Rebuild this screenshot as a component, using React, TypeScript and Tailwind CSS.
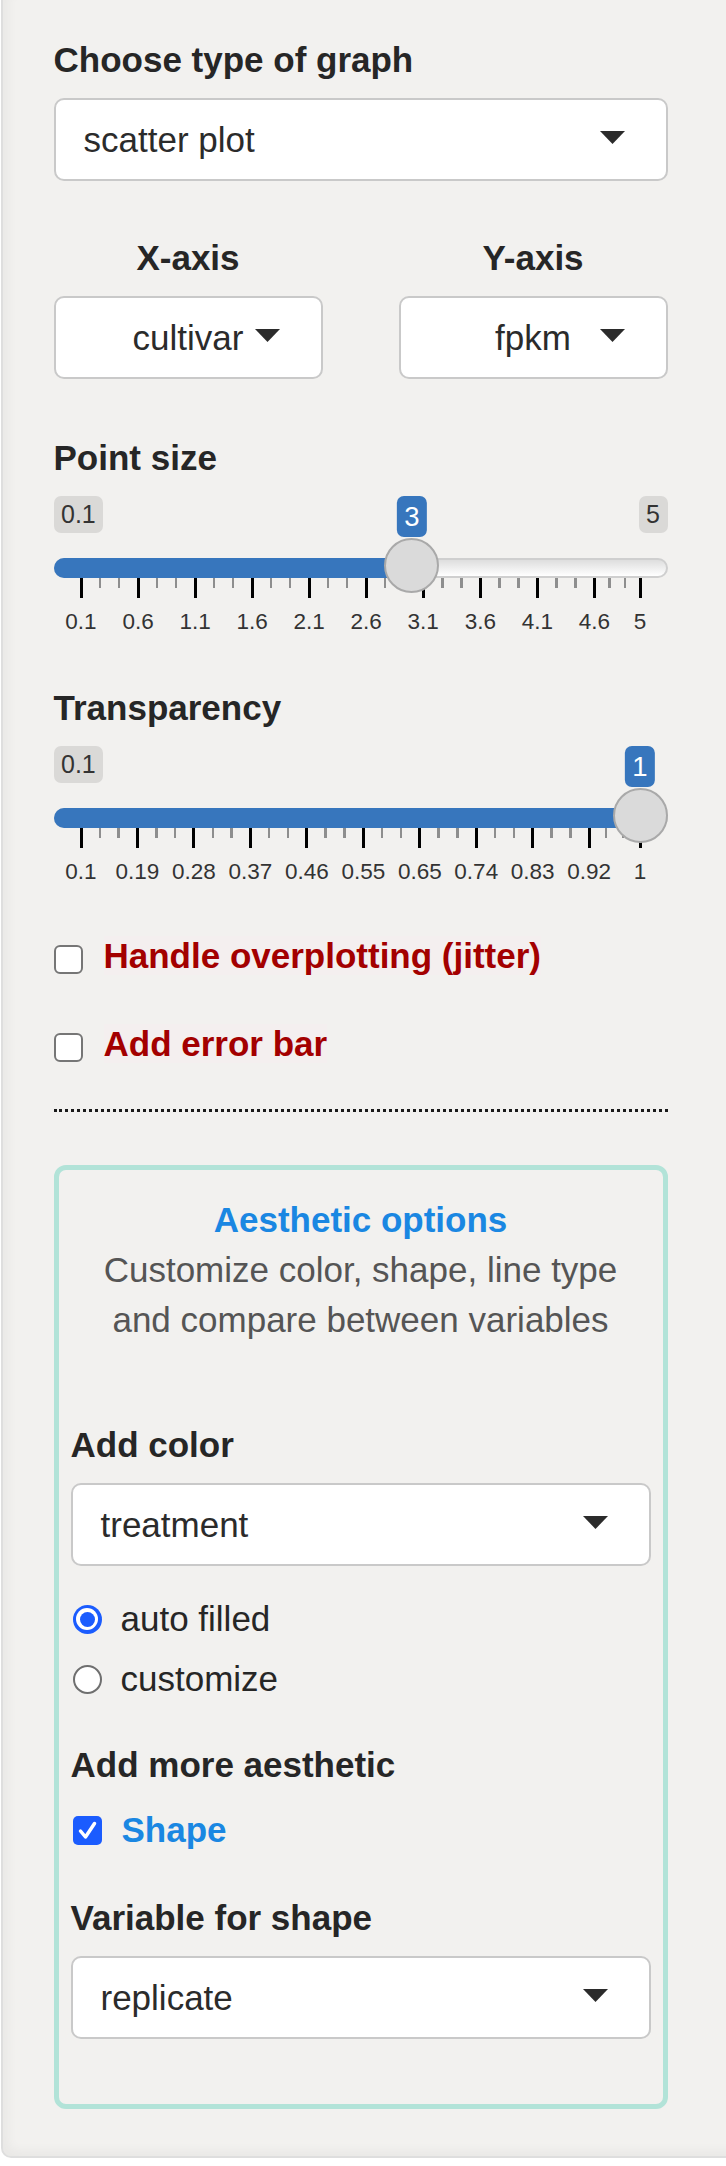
import React from "react";

type Tick = { p: number; label: string };

const USABLE = 559;
const OFF = 27.5;

function Caret() {
  return (
    <svg width="25" height="13" viewBox="0 0 25 13" className="block">
      <polygon points="0,0 25,0 12.5,13" fill="#2b2b2b" />
    </svg>
  );
}

function Dropdown({ text, center }: { text: string; center?: boolean }) {
  return (
    <div className="relative h-[83px] w-full rounded-[10px] border-[2.5px] border-[#c9c9c9] bg-white">
      <div
        className={
          center
            ? "flex h-full items-center justify-center text-[35px] leading-[50px] text-[#2b2b2b]"
            : "flex h-full items-center pl-[28px] text-[35px] leading-[50px] text-[#2b2b2b]"
        }
      >
        {text}
      </div>
      <div className="absolute right-[41px] top-[31px]">
        <Caret />
      </div>
    </div>
  );
}

function Label({ children, center }: { children: React.ReactNode; center?: boolean }) {
  return (
    <div
      className={
        center
          ? "mb-[13px] text-center text-[35px] font-bold leading-[50px] text-[#262626]"
          : "mb-[13px] text-[35px] font-bold leading-[50px] text-[#262626]"
      }
    >
      {children}
    </div>
  );
}

function Slider({
  ticks,
  value,
  valueLabel,
  minLabel,
  maxLabel,
}: {
  ticks: Tick[];
  value: number;
  valueLabel: string;
  minLabel: string;
  maxLabel?: string;
}) {
  const cx = (p: number) => OFF + p * USABLE;
  const vx = cx(value);
  const small: number[] = [];
  for (let i = 0; i < ticks.length - 1; i++) {
    const a = cx(ticks[i].p);
    const b = cx(ticks[i + 1].p);
    small.push(a + (b - a) / 3, a + (2 * (b - a)) / 3);
  }
  return (
    <div className="relative h-[138px] w-full">
      <div className="absolute left-0 top-0 h-[37px] rounded-[7px] bg-[#dad9d7] px-[7.5px] text-[25px] leading-[37px] text-[#333]">
        {minLabel}
      </div>
      {maxLabel && (
        <div className="absolute right-0 top-0 h-[37px] rounded-[7px] bg-[#dad9d7] px-[7.5px] text-[25px] leading-[37px] text-[#333]">
          {maxLabel}
        </div>
      )}
      <div className="absolute left-0 right-0 top-[62px] h-[20px] rounded-full border-[2px] border-[#cfcfcf] bg-linear-to-b from-[#dedede] to-white" />
      <div
        className="absolute left-0 top-[62px] h-[20px] rounded-l-full bg-[#3776bd]"
        style={{ width: vx }}
      />
      {ticks.map((t, i) => (
        <div
          key={"M" + i}
          className="absolute top-[82px] h-[20px] w-[3px] bg-black"
          style={{ left: cx(t.p) - 1.5 }}
        />
      ))}
      {small.map((x, i) => (
        <div
          key={"s" + i}
          className="absolute top-[82px] h-[10px] w-[2.5px] bg-[#8e8e8e]"
          style={{ left: x - 1.25 }}
        />
      ))}
      {ticks.map((t, i) => (
        <div
          key={"L" + i}
          className="absolute top-[113px] -translate-x-1/2 text-[22.5px] leading-[26px] text-[#333] whitespace-nowrap"
          style={{ left: cx(t.p) }}
        >
          {t.label}
        </div>
      ))}
      <div
        className="absolute top-[42px] h-[55px] w-[55px] rounded-full border-[2.5px] border-[#a9a9a9] bg-[#dadada]"
        style={{ left: vx - 27.5 }}
      />
      <div
        className="absolute top-0 h-[41px] -translate-x-1/2 rounded-[7px] bg-[#3776bd] px-[7.5px] text-[27.5px] leading-[41px] text-white"
        style={{ left: vx }}
      >
        {valueLabel}
      </div>
    </div>
  );
}

function EmptyCheckbox() {
  return (
    <div className="mt-[9px] h-[29px] w-[29px] shrink-0 rounded-[6px] border-[2.5px] border-[#767676] bg-white" />
  );
}

export default function App() {
  const psVals = [0.1, 0.6, 1.1, 1.6, 2.1, 2.6, 3.1, 3.6, 4.1, 4.6];
  const psTicks: Tick[] = psVals
    .map((v) => ({ p: (v - 0.1) / 4.9, label: String(v) }))
    .concat([{ p: 1, label: "5" }]);
  const trLabels = ["0.1", "0.19", "0.28", "0.37", "0.46", "0.55", "0.65", "0.74", "0.83", "0.92"];
  const trTicks: Tick[] = trLabels
    .map((l, k) => ({ p: k / 9.9, label: l }))
    .concat([{ p: 1, label: "1" }]);

  return (
    <div className="h-[2166px] w-[726px] overflow-hidden bg-white font-['Liberation_Sans',Arial,sans-serif]">
      <div className="ml-[1px] w-[740px] rounded-bl-[10px] border-b-[2.5px] border-l-[2.5px] border-[#dedede] bg-[#f2f1ef] pb-[47px] pl-[50.5px] pt-[35px] shadow-[inset_6px_-6px_10px_rgba(0,0,0,0.035)]">
        <div className="flex w-[614px] flex-col">
          <Label>Choose type of graph</Label>
          <Dropdown text="scatter plot" />

          <div className="mt-[52px] flex gap-[76px]">
            <div className="w-[269px]">
              <Label center>X-axis</Label>
              <Dropdown text="cultivar" center />
            </div>
            <div className="w-[269px]">
              <Label center>Y-axis</Label>
              <Dropdown text="fpkm" center />
            </div>
          </div>

          <div className="mt-[54px]">
            <Label>Point size</Label>
          </div>
          <Slider ticks={psTicks} value={(3 - 0.1) / 4.9} valueLabel="3" minLabel="0.1" maxLabel="5" />

          <div className="mt-[49px]">
            <Label>Transparency</Label>
          </div>
          <Slider ticks={trTicks} value={1} valueLabel="1" minLabel="0.1" />

          <div className="mt-[52px] flex items-start gap-[21px]">
            <EmptyCheckbox />
            <span className="bg-[#f4efef] text-[35px] font-bold leading-[39px] text-[#a30000]">
              Handle overplotting (jitter)
            </span>
          </div>
          <div className="mt-[49px] flex items-start gap-[21px]">
            <EmptyCheckbox />
            <span className="bg-[#f4efef] text-[35px] font-bold leading-[39px] text-[#a30000]">
              Add error bar
            </span>
          </div>

          <div className="mt-[46px] h-0 w-full border-t-[3px] border-dotted border-[#1a1a1a]" />

          <div className="mt-[53px] rounded-[12px] border-[5px] border-[#b2e3d8] px-[12px] pb-[65px] pt-[25px]">
            <div className="text-center text-[35px] font-bold leading-[50px] text-[#1a87e2]">
              Aesthetic options
            </div>
            <div className="text-center text-[35px] leading-[50px] text-[#555555]">
              Customize color, shape, line type
              <br />
              and compare between variables
            </div>

            <div className="mt-[75px]">
              <Label>Add color</Label>
            </div>
            <Dropdown text="treatment" />

            <div className="mt-[28px] flex h-[50px] items-center gap-[19px] pl-[2px]">
              <div className="flex h-[29px] w-[29px] shrink-0 items-center justify-center rounded-full bg-[#1b5cfe]">
                <div className="flex h-[22px] w-[22px] items-center justify-center rounded-full bg-white">
                  <div className="h-[15px] w-[15px] rounded-full bg-[#1b5cfe]" />
                </div>
              </div>
              <span className="text-[35px] leading-[50px] text-[#262626]">auto filled</span>
            </div>
            <div className="mt-[10px] flex h-[50px] items-center gap-[19px] pl-[2px]">
              <div className="h-[29px] w-[29px] shrink-0 rounded-full border-[2.5px] border-[#6f6f6f] bg-white" />
              <span className="text-[35px] leading-[50px] text-[#262626]">customize</span>
            </div>

            <div className="mt-[36px] text-[35px] font-bold leading-[50px] text-[#262626]">
              Add more aesthetic
            </div>
            <div className="mt-[15px] flex h-[50px] items-center gap-[20px] pl-[2px]">
              <svg width="29" height="29" viewBox="0 0 29 29" className="block shrink-0">
                <rect x="0" y="0" width="29" height="29" rx="5" fill="#1b5cfe" />
                <path d="M7.5 15 L12.5 21 L21.5 7.5" fill="none" stroke="white" strokeWidth="3.5" strokeLinecap="round" strokeLinejoin="round" />
              </svg>
              <span className="text-[35px] font-bold leading-[50px] text-[#1a87e2]">Shape</span>
            </div>

            <div className="mt-[38px]">
              <Label>Variable for shape</Label>
            </div>
            <Dropdown text="replicate" />
          </div>
        </div>
      </div>
    </div>
  );
}
